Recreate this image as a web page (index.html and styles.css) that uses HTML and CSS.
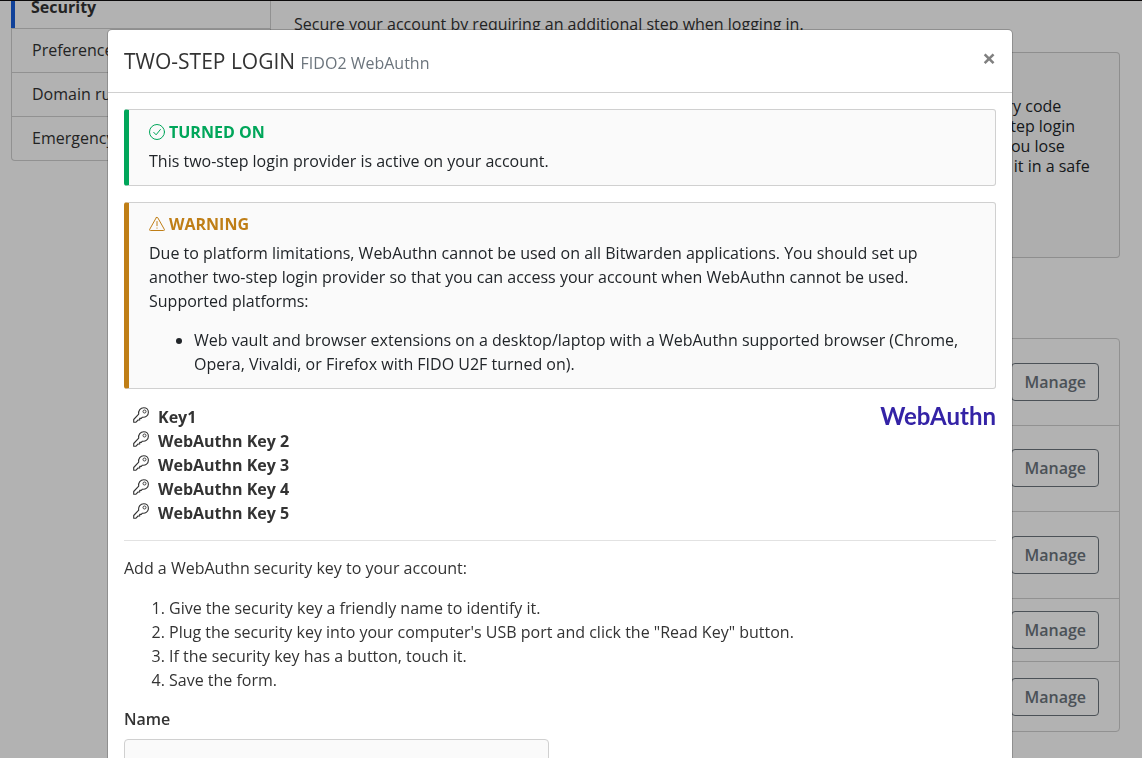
FILE: index.html
```html
<!DOCTYPE html>
<html lang="en">
<head>
<meta charset="utf-8">
<title>Two-step login</title>
<link rel="stylesheet" href="styles.css">
</head>
<body>
<svg class="defs" aria-hidden="true">
  <symbol id="key" viewBox="0 0 16 16">
    <path d="M5.700 7.200C5.100 3.700 7.400.7 10.800.7c2.600 0 4.600 2 4.600 4.500 0 3.200-2.800 5.500-6 5l-1.100 1.200H6.700v1.600H5.100L3 15.200H.7v-2.700z" fill="none" stroke="currentColor" stroke-width="1.100" stroke-linejoin="round"/>
    <circle cx="11.500" cy="4.500" r="1.500" fill="none" stroke="currentColor" stroke-width=".9"/>
  </symbol>
</svg>
<div class="page">
  <nav class="side">
    <a class="side-item active" href="#">Security</a>
    <a class="side-item" href="#">Preferences</a>
    <a class="side-item" href="#">Domain rules</a>
    <a class="side-item" href="#">Emergency access</a>
  </nav>
  <main class="main">
    <p class="intro">Secure your account by requiring an additional step when logging in.</p>
    <section class="recovery">
      <p>Setting up two-step login can permanently lock you out of your Bitwarden account. A recovery code allows you to access your account in the event that you can no longer use your normal two-step login provider (example: you lose your device). Bitwarden support will not be able to assist you if you lose access to your account. We recommend you write down or print the recovery code and keep it in a safe place.</p>
    </section>
    <ul class="providers">
      <li class="provider"><button class="manage" type="button">Manage</button></li>
      <li class="provider"><button class="manage" type="button">Manage</button></li>
      <li class="provider"><button class="manage" type="button">Manage</button></li>
      <li class="provider compact"><button class="manage" type="button">Manage</button></li>
      <li class="provider last"><button class="manage" type="button">Manage</button></li>
    </ul>
  </main>
</div>
<div class="backdrop">
  <div class="dialog" role="dialog" aria-labelledby="title">
    <header class="dialog-head">
      <h2 class="title" id="title">TWO-STEP LOGIN <small>FIDO2 WebAuthn</small></h2>
      <button class="close" type="button" aria-label="Close">×</button>
    </header>
    <div class="dialog-body">
      <section class="callout success">
        <h3 class="callout-title">
          <svg class="icon" viewBox="0 0 16 16" aria-hidden="true"><g fill="none" stroke="currentColor" stroke-linecap="round" stroke-linejoin="round"><circle cx="8" cy="8" r="7.500"/><path d="M4.700 8.300l2.400 2.500 4.300-5.300"/></g></svg>
          TURNED ON
        </h3>
        <p>This two-step login provider is active on your account.</p>
      </section>
      <section class="callout warning">
        <h3 class="callout-title">
          <svg class="icon" viewBox="0 0 16 16" aria-hidden="true"><g fill="none" stroke="currentColor" stroke-linecap="round" stroke-linejoin="round"><path d="M7.300 1.600L.7 13.300q-.6 1.200.7 1.200h13.200q1.300 0 .7-1.200L8.700 1.600q-.7-1-1.400 0z"/><path d="M8 5.500v4.200M8 12v.2"/></g></svg>
          WARNING
        </h3>
        <p>Due to platform limitations, WebAuthn cannot be used on all Bitwarden applications. You should set up another two-step login provider so that you can access your account when WebAuthn cannot be used. Supported platforms:</p>
        <ul class="platforms">
          <li>Web vault and browser extensions on a desktop/laptop with a WebAuthn supported browser (Chrome, Opera, Vivaldi, or Firefox with FIDO U2F turned on).</li>
        </ul>
      </section>
      <div class="keys-row">
        <ul class="keys">
          <li><svg class="key-icon" aria-hidden="true"><use href="#key"/></svg>Key1</li>
          <li><svg class="key-icon" aria-hidden="true"><use href="#key"/></svg>WebAuthn Key 2</li>
          <li><svg class="key-icon" aria-hidden="true"><use href="#key"/></svg>WebAuthn Key 3</li>
          <li><svg class="key-icon" aria-hidden="true"><use href="#key"/></svg>WebAuthn Key 4</li>
          <li><svg class="key-icon" aria-hidden="true"><use href="#key"/></svg>WebAuthn Key 5</li>
        </ul>
        <span class="logo">WebAuthn</span>
      </div>
      <hr class="rule">
      <p>Add a WebAuthn security key to your account:</p>
      <ol class="steps">
        <li>Give the security key a friendly name to identify it.</li>
        <li>Plug the security key into your computer's USB port and click the "Read Key" button.</li>
        <li>If the security key has a button, touch it.</li>
        <li>Save the form.</li>
      </ol>
      <label class="label" for="name">Name</label>
      <input class="field" id="name" type="text">
    </div>
  </div>
</div>
</body>
</html>
```
FILE: styles.css
```css
* { box-sizing: border-box; }
html, body { height: 100%; }
body {
  margin: 0;
  overflow: hidden;
  border-top: 1px solid #0c0a0b;
  background: #fff;
  color: #333;
  font: 16px/24px "Open Sans", "Noto Sans", sans-serif;
}
h2, h3, p, ul, ol { margin: 0; }
.defs { display: none; }

.page {
  display: flex;
  align-items: flex-start;
  gap: 23px;
  padding: 0 22px 0 11px;
}
.side {
  flex: 0 0 260px;
  border: solid #d0d0d0;
  border-width: 0 1px 1px;
  border-radius: 0 0 4px 4px;
}
.side-item {
  display: block;
  padding: 9px 20px 10px;
  border-top: 1px solid #d0d0d0;
  color: #333;
  text-decoration: none;
}
.side-item.active {
  margin-left: -1px;
  padding: 0 16px 15px;
  border-top: 0;
  border-left: 4px solid #175ddc;
  font-weight: 700;
  line-height: 12px;
}
.main { flex: 1; min-width: 0; }
.intro { padding-top: 11px; }
.recovery {
  min-height: 206px;
  margin: 16px 0 80px;
  padding: 43px 20px 12px 24px;
  border: 1px solid #ccc;
  border-left-width: 5px;
  border-radius: 4px;
  background: #fafafa;
  color: #212529;
  line-height: 20px;
}
.providers {
  padding: 0;
  border: 1px solid #d0d0d0;
  border-radius: 4px;
  list-style: none;
}
.provider {
  display: flex;
  justify-content: flex-end;
  padding: 24px 20px;
  border-bottom: 1px solid #d0d0d0;
}
.provider:nth-child(2) { padding-top: 23px; }
.compact { padding: 12px 20px; }
.last { padding: 16px 20px 15px; border-bottom: 0; }
.manage {
  height: 38px;
  padding: 0 12px;
  border: 1px solid #6c757d;
  border-radius: 4px;
  background: transparent;
  color: #6c757d;
  font: 600 16px/24px "Open Sans", sans-serif;
}

.backdrop {
  position: fixed;
  inset: 1px 0 0;
  padding: 28px 129px 0 107px;
  background: rgba(0, 0, 0, .3);
}
.dialog {
  min-height: 100%;
  border: 1px solid rgba(0, 0, 0, .2);
  border-radius: 5px;
  background: #fff;
  background-clip: padding-box;
}
.dialog-head {
  display: flex;
  justify-content: space-between;
  align-items: flex-start;
  padding: 15px 16px;
  border-bottom: 1px solid #d0d0d0;
}
.title { font-size: 21px; font-weight: 400; line-height: 32px; }
.title small { color: #6c757d; font-size: 16px; line-height: 16px; }
.close {
  padding: 0;
  border: 0;
  background: none;
  color: #808080;
  font: 700 24px/26px "Open Sans", sans-serif;
}
.dialog-body { padding: 16px; }

.callout {
  margin-bottom: 16px;
  padding: 12px 20px;
  border: 1px solid #d0d0d0;
  border-left-width: 5px;
  border-radius: 3px;
  background: #fafafa;
  color: #212529;
}
.callout-title {
  display: flex;
  align-items: center;
  gap: 4px;
  margin-bottom: 7px;
  font-size: 16px;
  font-weight: 700;
  line-height: 20px;
}
.icon { width: 16px; height: 16px; }
.success { border-left-color: #00a65a; }
.success .callout-title { color: #00a65a; }
.warning { padding-top: 11px; border-left-color: #bf7e16; }
.warning .callout-title { color: #bf7e16; }
.platforms { margin-top: 15px; padding-left: 45px; }

.keys-row { display: flex; justify-content: space-between; align-items: flex-start; }
.keys { padding: 0 0 0 9px; list-style: none; font-weight: 700; }
.keys li { display: flex; gap: 9px; }
.key-icon { width: 16px; height: 16px; margin-top: 2px; }
.logo { color: #3423a6; font: 700 24px/22px Lato, sans-serif; }
.rule { margin: 15px 0; border: 0; border-top: 1px solid #e2e2e2; }
.steps { margin: 16px 0 15px; padding-left: 45px; }
.label { display: block; margin-bottom: 8px; font-weight: 600; }
.field {
  width: calc(50% - 11px);
  height: 38px;
  padding: 6px 12px;
  border: 1px solid #d0d0d0;
  border-radius: 4px;
  background: #fafafa;
  font: inherit;
}
```
